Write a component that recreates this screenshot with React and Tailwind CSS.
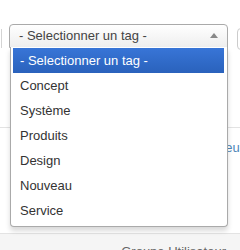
import React from 'react';

const tags = ['Concept', 'Système', 'Produits', 'Design', 'Nouveau', 'Service'];

const App = () => {
  return (
    <div className="relative w-[240px] h-[250px] overflow-hidden bg-white font-['Liberation_Sans',Arial,sans-serif] text-[13px]">
      {/* page behind the open select */}
      <div className="h-[128px] border-b border-[#e3e3e3]">
        <div className="flex items-start pt-[24px]">
          <div className="shrink-0 w-[2px] h-[19px] mt-[5px] border-r border-[#d4d4d4]" />
          <div className="shrink-0 ml-[7px] w-[219px] h-[24px] flex items-center justify-between pl-[9px] pr-[9px] border border-[#aaa] rounded-t-[4px] bg-gradient-to-b from-white to-[#eeeeee] text-[#444]">
            <span>- Selectionner un tag -</span>
            <svg width="8" height="5" viewBox="0 0 8 5" className="mb-[1px]">
              <path d="M0 5 L4 0 L8 5 Z" fill="#888" />
            </svg>
          </div>
          <div className="shrink-0 ml-[9px] mt-[4px] w-[20px] h-[22px] border border-[#ccc] rounded-l-[4px] bg-white" />
        </div>
      </div>
      <div className="h-[106px] border-b border-[#e3e3e3] flex justify-end">
        <span className="mt-[10px] mr-[-4px] text-[#4f86b8]">eur</span>
      </div>
      <div className="h-[20px] bg-[#f5f5f5] flex justify-end pr-[14px]">
        <span className="mt-[8px] text-[#666]">Groupe Utilisateur</span>
      </div>

      {/* open dropdown */}
      <div className="absolute left-[10px] top-[47px] w-[218px] h-[180px] bg-white border border-[#aaa] border-t-0 rounded-b-[4px] shadow-[0_4px_5px_rgba(0,0,0,0.15)] pt-[1px] px-[2px]">
        <div className="h-[25px] flex items-center pl-[7px] mr-[1px] text-white bg-gradient-to-b from-[#3875d7] to-[#2a62bc]">
          - Selectionner un tag -
        </div>
        {tags.map((t) => (
          <div key={t} className="h-[25px] flex items-center pl-[7px] text-[#333]">
            {t}
          </div>
        ))}
      </div>
    </div>
  );
};

export default App;
